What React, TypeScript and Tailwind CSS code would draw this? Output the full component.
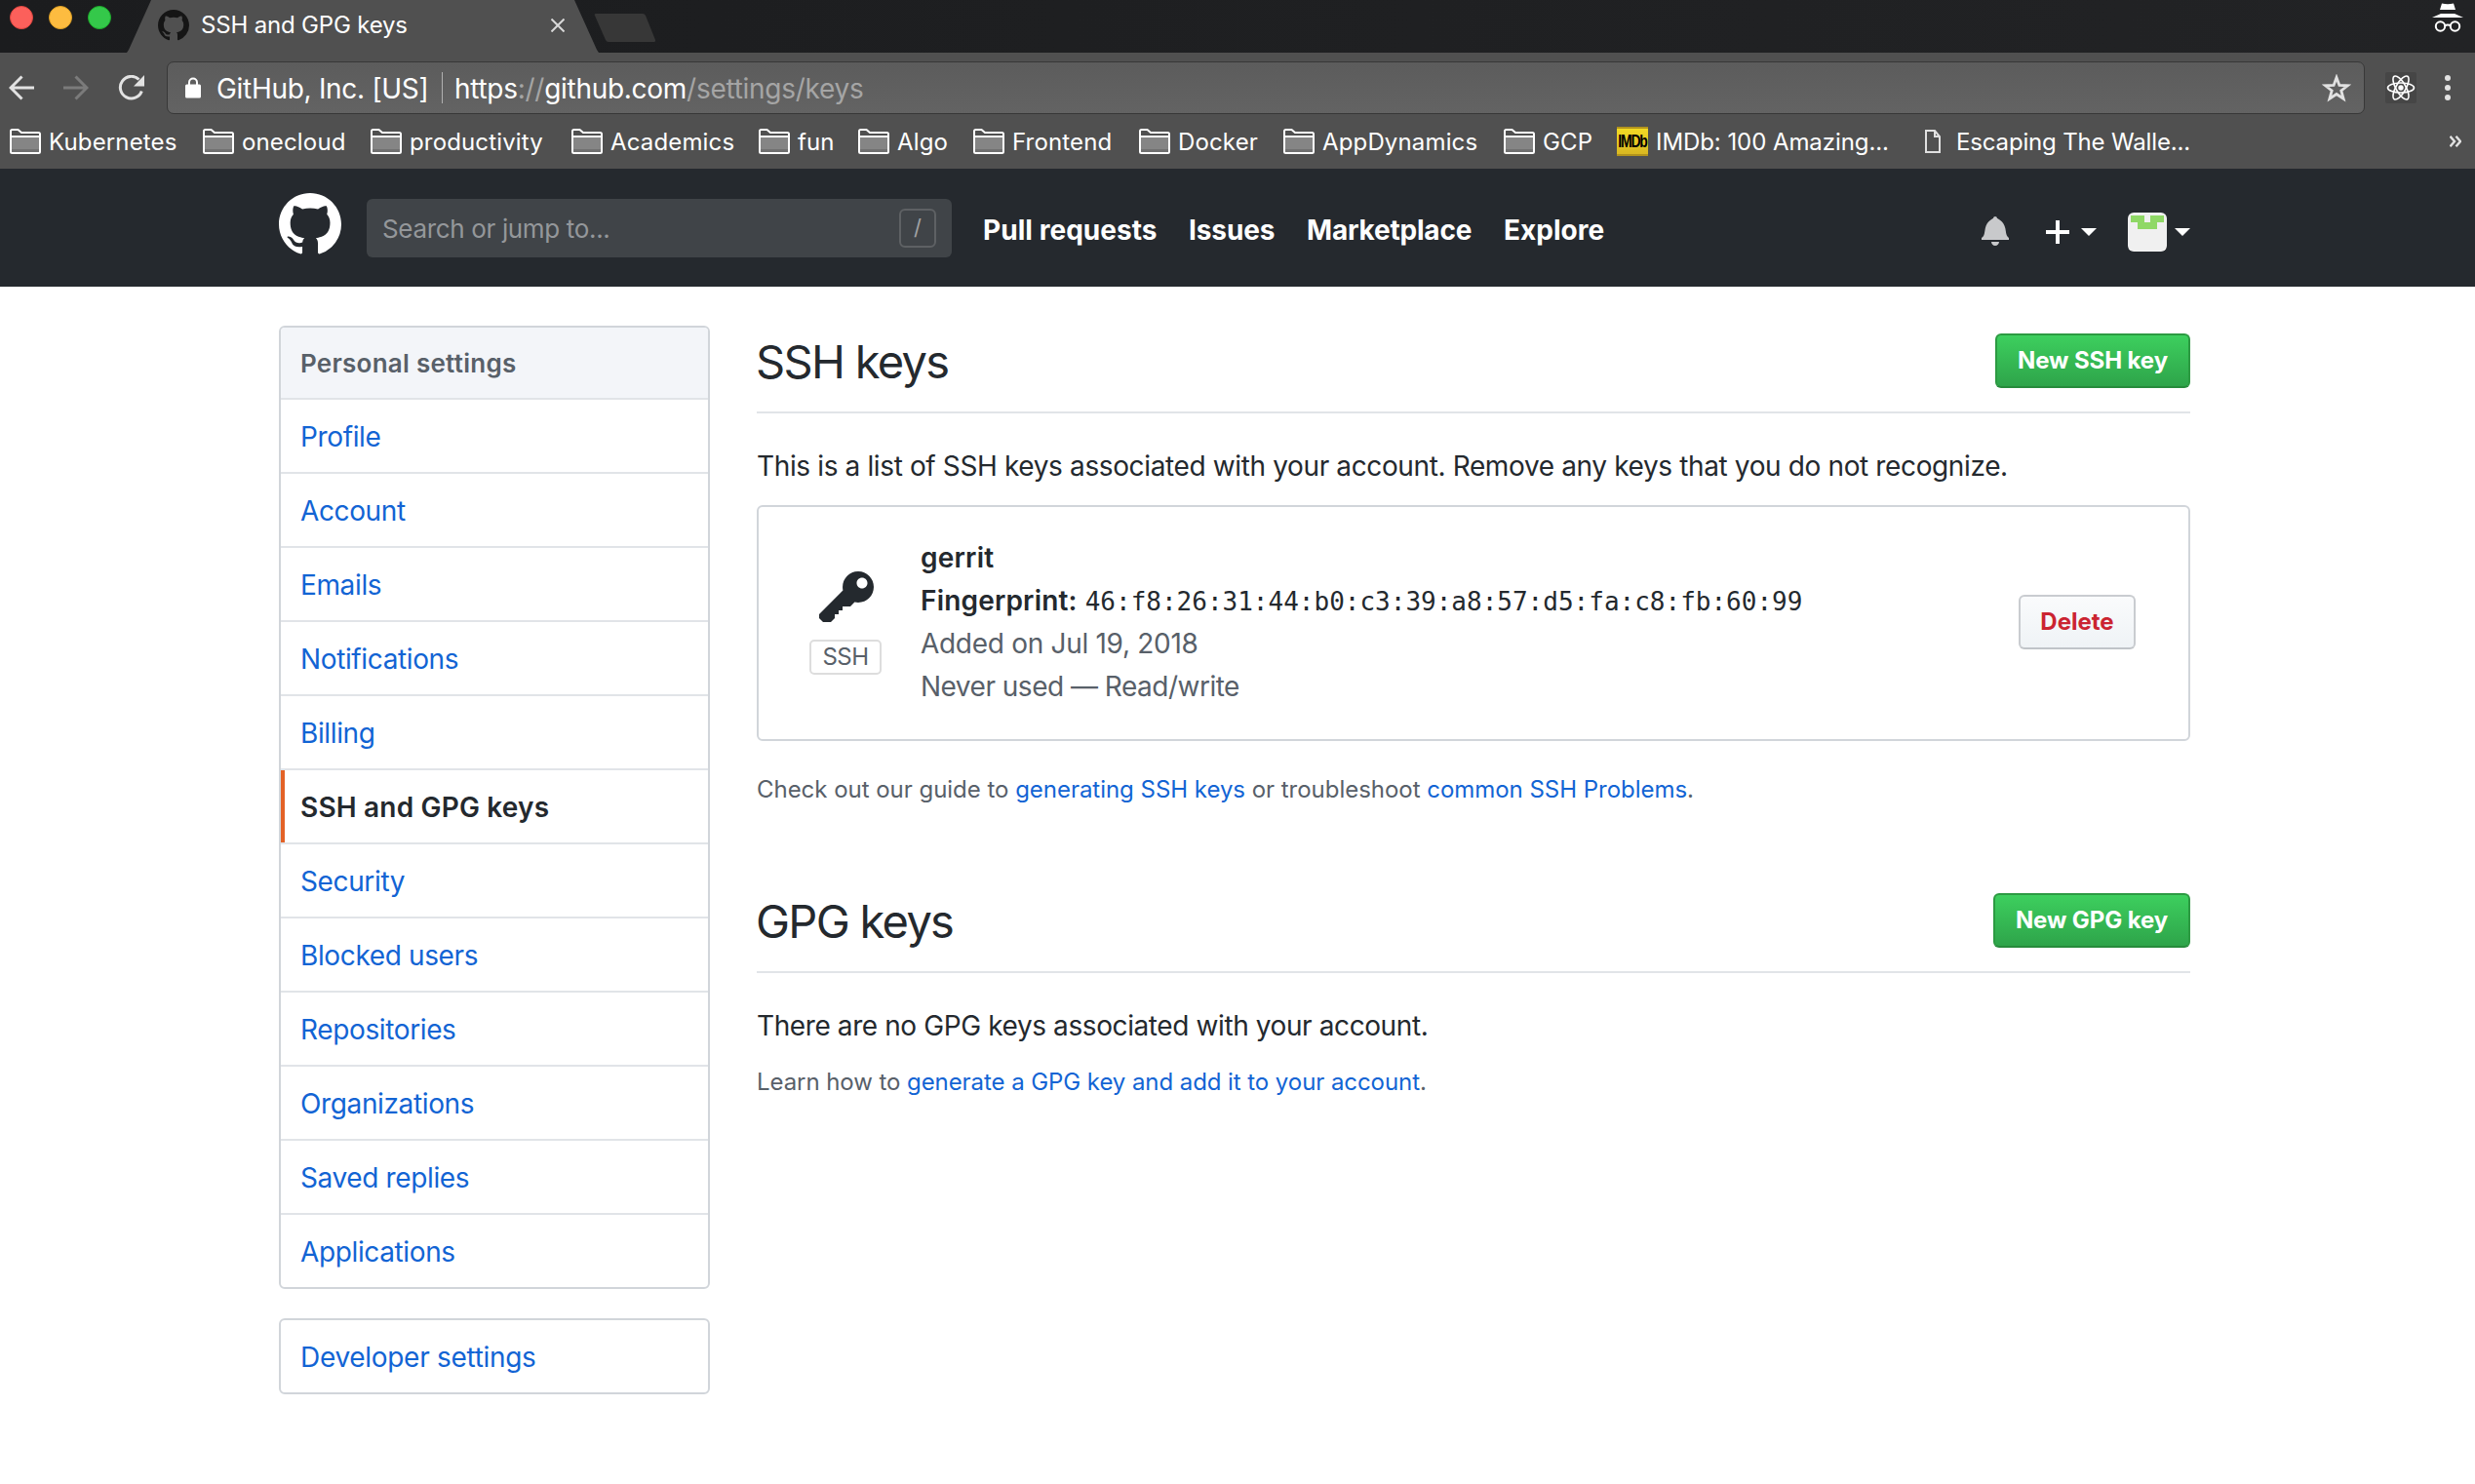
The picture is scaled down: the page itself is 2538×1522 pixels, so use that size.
import type { ReactNode } from "react";

const MARK =
  "M8 0C3.58 0 0 3.58 0 8c0 3.54 2.29 6.53 5.47 7.59.4.07.55-.17.55-.38 0-.19-.01-.82-.01-1.49-2.01.37-2.53-.49-2.69-.94-.09-.23-.48-.94-.82-1.13-.28-.15-.68-.52-.01-.53.63-.01 1.08.58 1.23.82.72 1.21 1.87.87 2.33.66.07-.52.28-.87.51-1.07-1.78-.2-3.64-.89-3.64-3.95 0-.87.31-1.59.82-2.15-.08-.2-.36-1.02.08-2.12 0 0 .67-.21 2.2.82.64-.18 1.32-.27 2-.27.68 0 1.36.09 2 .27 1.53-1.04 2.2-.82 2.2-.82.44 1.1.16 1.92.08 2.12.51.56.82 1.27.82 2.15 0 3.07-1.87 3.75-3.65 3.95.29.25.54.73.54 1.48 0 1.07-.01 1.93-.01 2.2 0 .21.15.46.55.38A8.013 8.013 0 0 0 16 8c0-4.42-3.58-8-8-8z";

function Mark({ className }: { className: string }) {
  return (
    <svg viewBox="0 0 16 16" className={className} fill="currentColor">
      <path fillRule="evenodd" d={MARK} />
    </svg>
  );
}

function FolderIcon() {
  return (
    <svg viewBox="0 0 32 26" className="h-[26px] w-8 shrink-0">
      <rect x="2" y="8" width="28" height="16" fill="#858585" />
      <rect x="2" y="21" width="28" height="3" fill="#707070" />
      <path d="M1 23.500V2.500Q1 1 2.500 1H8.500L12 4H29.500Q31 4 31 5.500V23.500Q31 25 29.500 25H2.500Q1 25 1 23.500ZM1 8H31" fill="none" stroke="#fff" strokeWidth="2" />
    </svg>
  );
}

const folders = [
  { name: "Kubernetes", box: "w-[198px]" },
  { name: "onecloud", box: "w-[172px]" },
  { name: "productivity", box: "w-[206px]" },
  { name: "Academics", box: "w-[192px]" },
  { name: "fun", box: "w-[102px]" },
  { name: "Algo", box: "w-[118px]" },
  { name: "Frontend", box: "w-[170px]" },
  { name: "Docker", box: "w-[148px]" },
  { name: "AppDynamics", box: "w-[226px]" },
  { name: "GCP", box: "w-[116px]" },
];

function TabStrip() {
  return (
    <div className="flex h-[54px] items-start bg-linear-to-r from-[#1b1c1e] to-[#222325]">
      <div className="flex gap-4 pt-[6px] pl-[10px]">
        <span className="size-6 rounded-full border border-[#e2463f] bg-[#fc605b]" />
        <span className="size-6 rounded-full border border-[#dfa023] bg-[#fdbc40]" />
        <span className="size-6 rounded-full border border-[#1dad2b] bg-[#34c84a]" />
      </div>
      <div className="relative ml-[16px] h-[54px] w-[484px]">
        <svg viewBox="0 0 484 54" className="absolute inset-0 h-[54px] w-[484px]">
          <path d="M0 54L2 51L25 0H459L482 51L484 54Z" fill="#505050" />
        </svg>
        <div className="relative flex h-[52px] items-center pl-[32px] text-[24px] tracking-[-0.18px] text-white">
          <Mark className="size-8 text-[#151515]" />
          <span className="ml-[12px]">SSH and GPG keys</span>
          <svg viewBox="0 0 14 14" className="ml-[147px] size-[14px]">
            <path d="M0.500 0.500L13.500 13.500M13.500 0.500L0.500 13.500" stroke="#d8d8d8" strokeWidth="2" />
          </svg>
        </div>
      </div>
      <svg viewBox="0 0 64 30" className="mt-[14px] ml-[-5px] h-[30px] w-16">
        <path d="M2 0H50Q52 0 53 2L63 27Q63.500 29 61 29H15Q13 29 12 27L1 2Q0 0 2 0Z" fill="#373737" />
      </svg>
      <svg viewBox="0 0 32 31" className="mt-[3px] mr-[12px] ml-auto h-[31px] w-8">
        <path d="M10 0.500Q16 2 22 0.500L24 7H8ZM9 11H23L32 15H0Z" fill="#fff" />
        <g fill="none" stroke="#fff" strokeWidth="2">
          <circle cx="8.500" cy="24" r="4.700" />
          <circle cx="23.500" cy="24" r="4.700" />
          <path d="M13 23.500Q16 21.500 19 23.500" />
        </g>
      </svg>
    </div>
  );
}

function Toolbar() {
  return (
    <div className="flex h-[72px] items-center">
      <svg viewBox="0 0 26 26" className="ml-[9px] size-[26px]" fill="none" stroke="#e2e2e2" strokeWidth="3">
        <path d="M26 13H2M13.500 1.500L2 13L13.500 24.500" />
      </svg>
      <svg viewBox="0 0 26 26" className="ml-[30px] size-[26px]" fill="none" stroke="#7b7b7b" strokeWidth="3">
        <path d="M0 13H24M12.500 1.500L24 13L12.500 24.500" />
      </svg>
      <svg viewBox="0 0 28 26" className="ml-[30px] h-[26px] w-[28px]">
        <path d="M21.500 4.500A11.300 11.300 0 1 0 24.300 16.500" fill="none" stroke="#e2e2e2" strokeWidth="3" />
        <path d="M27 0V11.500H16Z" fill="#e2e2e2" />
      </svg>
      <div className="ml-[22px] flex h-[54px] w-[2254px] items-center rounded-[7px] border border-[#383838] bg-linear-to-b from-[#5c5c5c] to-[#636363] text-[28px] text-white">
        <svg viewBox="0 0 16 22" className="mb-[1px] ml-[18px] h-[22px] w-4">
          <rect y="7.500" width="16" height="14" rx="1.500" fill="#fff" />
          <path d="M4 9V5.500a4 4 0 0 1 8 0V9" fill="none" stroke="#fff" strokeWidth="2" />
        </svg>
        <span className="mt-[2px] ml-[16px] w-[231px] tracking-[-0.3px] whitespace-nowrap">GitHub, Inc. [US]</span>
        <span className="h-8 w-px bg-[#b0b0b0]" />
        <span className="mt-[2px] ml-[12px] tracking-[-0.28px] whitespace-nowrap">
          https<span className="text-[#a5a5a5]">://</span>github.com<span className="text-[#a5a5a5]">/settings/keys</span>
        </span>
        <svg viewBox="0 0 30 29" className="mr-[13px] ml-auto h-[29px] w-[30px]">
          <path d="M15 3.500L17.900 11.500L26.500 11.800L19.800 17L22.100 25.200L15 20.500L7.900 25.200L10.200 17L3.500 11.800L12.100 11.500Z" fill="none" stroke="#e2e2e2" strokeWidth="2.800" />
        </svg>
      </div>
      <div className="ml-[21px] flex size-8 items-center justify-center rounded-[2px] bg-[#464646]">
        <svg viewBox="-15 -15 30 30" className="size-[30px]" fill="none" stroke="#fff" strokeWidth="1.600">
          <ellipse rx="13.500" ry="5" />
          <ellipse rx="13.500" ry="5" transform="rotate(60)" />
          <ellipse rx="13.500" ry="5" transform="rotate(120)" />
          <circle r="2.700" fill="#fff" stroke="none" />
        </svg>
      </div>
      <svg viewBox="0 0 6 26" className="ml-[29px] h-[26px] w-[6px]" fill="#e2e2e2">
        <circle cx="3" cy="3" r="3" />
        <circle cx="3" cy="13" r="3" />
        <circle cx="3" cy="23" r="3" />
      </svg>
    </div>
  );
}

function Bookmarks() {
  return (
    <div className="flex h-[47px] items-center pb-[9px] pl-[10px] text-[24px] leading-[30px] tracking-[0.15px] whitespace-nowrap text-white">
      {folders.map((f) => (
        <div key={f.name} className={`flex shrink-0 items-center gap-[8px] ${f.box}`}>
          <FolderIcon />
          <span className="pt-px">{f.name}</span>
        </div>
      ))}
      <div className="flex w-[316px] shrink-0 items-center gap-[8px] tracking-[-0.07px]">
        <span className="flex h-[30px] w-8 items-center justify-center overflow-hidden border-y-2 border-[#b3941c] bg-linear-to-b from-[#f2da24] to-[#d9b822] font-['Liberation_Sans'] text-[14px] font-bold tracking-[-1.200px] text-black">
          <span className="scale-y-125">IMDb</span>
        </span>
        <span className="pt-px">IMDb: 100 Amazing...</span>
      </div>
      <svg viewBox="0 0 16 24" className="h-6 w-4 shrink-0" fill="none" stroke="#e0e0e0" strokeWidth="2">
        <path d="M1 1H10L15 7V23H1ZM10 1V7H15" />
      </svg>
      <span className="ml-[16px] pt-px tracking-[-0.16px]">Escaping The Walle...</span>
      <svg viewBox="0 0 12 12" className="mr-[14px] ml-auto h-3 w-3" fill="none" stroke="#e2e2e2" strokeWidth="2.400">
        <path d="M0.500 0.800L5 6L0.500 11.200M6.500 0.800L11 6L6.500 11.200" />
      </svg>
    </div>
  );
}

function Caret() {
  return (
    <svg viewBox="0 0 16 8" className="h-2 w-4" fill="#fff">
      <path d="M0 0H16L8 8Z" />
    </svg>
  );
}

function SiteHeader() {
  return (
    <header className="flex h-[121px] items-center bg-[#25292e] pr-[292px] pl-[286px]">
      <Mark className="mb-[7px] size-16 text-white" />
      <div className="ml-[26px] flex h-[60px] w-[600px] items-center justify-between rounded-[6px] bg-[#404448] px-4">
        <span className="pt-[2px] text-[26px] tracking-[-0.34px] text-[#94979a]">Search or jump to...</span>
        <span className="flex h-10 w-[38px] items-center justify-center rounded-[6px] border-2 border-[#5e6164] text-[22px] text-[#a0a2a5]">/</span>
      </div>
      <nav className="mt-[5px] ml-[32px] flex text-[28px] font-[650] text-white">
        <span className="w-[211px] tracking-[0.05px]">Pull requests</span>
        <span className="w-[121px] tracking-[-0.1px]">Issues</span>
        <span className="w-[202px] tracking-[-0.2px]">Marketplace</span>
        <span>Explore</span>
      </nav>
      <div className="mt-[9px] ml-auto flex items-center">
        <svg viewBox="0 0 14 16" className="mb-[4px] h-8 w-7" fill="#c8c9cb">
          <path d="M14 12v1H0v-1l.73-.58c.77-.77.81-2.550 1.190-4.420C2.690 3.230 6 2 6 2c0-.550.450-1 1-1s1 .450 1 1c0 0 3.390 1.230 4.160 5 .380 1.880.420 3.660 1.190 4.420l.660.580H14zm-7 4c1.110 0 2-.890 2-2H5c0 1.110.890 2 2 2z" />
        </svg>
        <svg viewBox="0 0 12 16" className="ml-[38px] h-8 w-6" fill="#fff">
          <path d="M12 9H7v5H5V9H0V7h5V2h2v5h5v2z" />
        </svg>
        <div className="ml-3"><Caret /></div>
        <svg viewBox="0 0 40 40" className="ml-8 size-10">
          <rect width="40" height="40" rx="6" fill="#f0f0f0" />
          <path d="M3 3H17V10H23V3H37V10H30V17H10V10H3Z" fill="#8fd866" />
        </svg>
        <div className="ml-2"><Caret /></div>
      </div>
    </header>
  );
}

const menu = ["Profile", "Account", "Emails", "Notifications", "Billing", "SSH and GPG keys", "Security", "Blocked users", "Repositories", "Organizations", "Saved replies", "Applications"];

function Sidebar() {
  return (
    <aside className="w-[442px] shrink-0 text-[28px] tracking-[-0.37px] text-[#1264d4]">
      <nav className="overflow-hidden rounded-[6px] border-2 border-[#d1d5da]">
        <div className="flex h-[72px] items-center bg-[#f3f5f9] pl-[20px] text-[26px] font-semibold tracking-[0.26px] text-[#586069]">Personal settings</div>
        {menu.map((m) =>
          m === "SSH and GPG keys" ? (
            <div key={m} className="relative flex h-[76px] items-center border-t-2 border-[#e1e4e8] pt-[2px] pl-[20px] font-semibold tracking-[0.18px] text-[#24292e]">
              <span className="absolute inset-y-0 left-0 w-1 bg-[#e36226]" />
              {m}
            </div>
          ) : (
            <div key={m} className="flex h-[76px] items-center border-t-2 border-[#e1e4e8] pt-[2px] pl-[20px]">{m}</div>
          ),
        )}
      </nav>
      <nav className="mt-[30px] flex h-[78px] items-center rounded-[6px] border-2 border-[#d1d5da] pt-[2px] pl-[20px] tracking-[-0.3px]">Developer settings</nav>
    </aside>
  );
}

function SectionHead({ title, action, width }: { title: string; action: string; width: string }) {
  return (
    <div className="flex h-[90px] items-center justify-between border-b-2 border-[#e1e4e8] pb-[14px]">
      <h2 className="-ml-px text-[47px] leading-[60px] tracking-[-1.700px]">{title}</h2>
      <button className={`-mt-[2px] flex h-14 items-center justify-center rounded-[6px] border-2 border-[#2c9a42] border-b-[#268b3b] bg-linear-to-b from-[#3dcf5e] to-[#2ea44a] text-[24px] font-[650] tracking-[-0.1px] text-white ${width}`}>{action}</button>
    </div>
  );
}

function Link({ children }: { children: ReactNode }) {
  return <a className="text-[#1264d4]">{children}</a>;
}

export default function App() {
  return (
    <div className="h-[1522px] w-[2538px] overflow-hidden bg-white font-['Inter',sans-serif] text-[#24292e]">
      <TabStrip />
      <div className="h-[119px] bg-[#505050]">
        <Toolbar />
        <Bookmarks />
      </div>
      <SiteHeader />
      <div className="flex gap-12 pt-10 pr-[292px] pl-[286px]">
        <Sidebar />
        <main className="flex-1">
          <SectionHead title="SSH keys" action="New SSH key" width="w-[200px]" />
          <p className="mt-[33px] text-[28px] leading-[42px] tracking-[-0.37px] whitespace-nowrap">
            This is a list of SSH keys associated with your account. Remove any keys that you do not recognize.
          </p>
          <div className="mt-[19px] flex h-[242px] items-center rounded-[6px] border-2 border-[#d1d5da] pr-[54px] pb-[2px] pl-[52px]">
            <div className="mb-[2px] flex w-[74px] flex-col items-center">
              <svg viewBox="0 0 14 16" className="ml-[2px] h-16 w-14" fill="#24292e">
                <path
                  fillRule="evenodd"
                  d="M12.830 2.170C12.080 1.420 11.140 1.030 10 1c-1.130.030-2.080.420-2.830 1.170S6.040 3.860 6.010 5c0 .300.030.590.090.890L0 12v1l1 1h2l1-1v-1h1v-1h1v-1h2l1.090-1.110c.300.080.590.110.910.110 1.140-.030 2.080-.420 2.830-1.170S13.970 6.140 14 5c-.030-1.140-.420-2.080-1.170-2.830zM11 5.380c-.770 0-1.380-.610-1.380-1.380 0-.770.610-1.380 1.380-1.380.770 0 1.380.610 1.380 1.380 0 .770-.610 1.380-1.380 1.380z"
                />
              </svg>
              <span className="mt-[10px] flex h-[36px] w-[74px] items-center justify-center rounded-[5px] border-2 border-[#dddddd] text-[24px] tracking-[-0.5px] text-[#586069]">SSH</span>
            </div>
            <div className="ml-[40px] text-[28px] leading-[44px] tracking-[-0.3px] whitespace-nowrap text-[#586069]">
              <div className="font-semibold tracking-[0.22px] text-[#24292e]">gerrit</div>
              <div className="flex text-[#24292e]">
                <span className="font-semibold tracking-[0.18px]">Fingerprint:</span>
                <code className="mt-px ml-[8px] font-['DejaVu_Sans_Mono',monospace] text-[26px] tracking-normal">46:f8:26:31:44:b0:c3:39:a8:57:d5:fa:c8:fb:60:99</code>
              </div>
              <div className="-mt-px">Added on Jul 19, 2018</div>
              <div className="tracking-[-0.5px]">Never used — Read/write</div>
            </div>
            <button className="ml-auto flex h-14 w-[120px] items-center justify-center rounded-[6px] border-2 border-[#c9ccd0] border-b-[#c0c4c8] bg-linear-to-b from-[#fafbfc] to-[#eff3f6] text-[24px] font-[650] text-[#cb2431]">Delete</button>
          </div>
          <p className="mt-[30px] text-[24px] leading-[40px] tracking-[-0.03px] text-[#586069]">
            Check out our guide to <Link>generating SSH keys</Link> or troubleshoot <Link>common SSH Problems</Link>.
          </p>
          <div className="mt-[78px]">
            <SectionHead title="GPG keys" action="New GPG key" width="w-[202px]" />
          </div>
          <p className="mt-[33px] text-[28px] leading-[42px] tracking-[-0.4px]">There are no GPG keys associated with your account.</p>
          <p className="mt-[17px] text-[24px] leading-[40px] tracking-[-0.07px] text-[#586069]">
            Learn how to <Link>generate a GPG key and add it to your account</Link>.
          </p>
        </main>
      </div>
    </div>
  );
}
